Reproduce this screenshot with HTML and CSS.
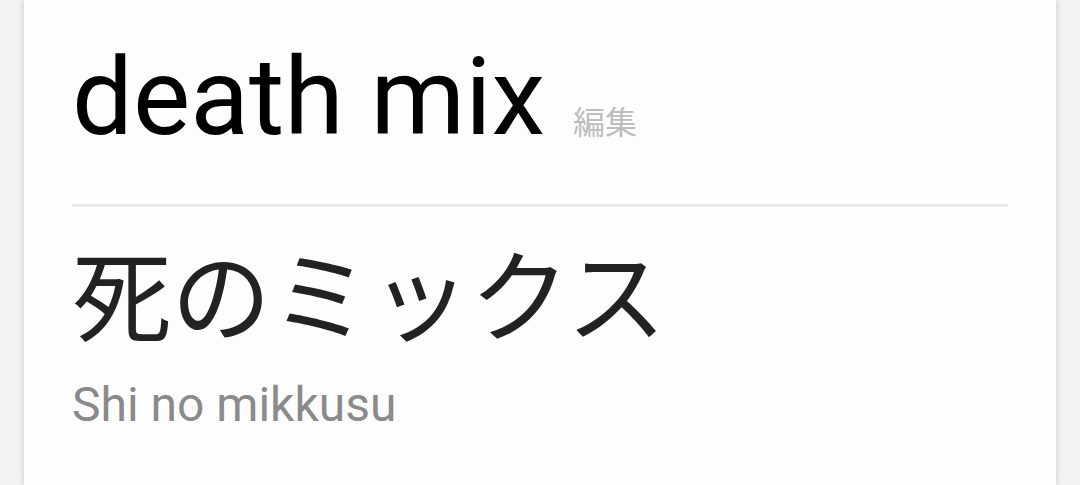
FILE: index.html
```html
<!DOCTYPE html>
<html lang="ja">
<head>
    <meta charset="UTF-8">
    <meta name="viewport" content="width=device-width, initial-scale=1.0">
    <title>death mix</title>
    <link rel="stylesheet" href="styles.css">
</head>
<body>
    <div class="card">
        <div class="title-row">
            <h1 class="title">death mix</h1>
            <a class="edit" href="#">編集</a>
        </div>
        <hr class="divider">
        <div class="word">死のミックス</div>
        <div class="reading">Shi no mikkusu</div>
    </div>
</body>
</html>
```

FILE: styles.css
```css
html, body {
    margin: 0;
    height: 100%;
}
body {
    background-color: #f2f2f2;
    font-family: Roboto, "Noto Sans CJK JP", sans-serif;
    overflow: hidden;
}
.card {
    margin: 0 24px;
    height: 100%;
    background: #fdfdfd;
    box-shadow: 0 0 6px rgba(0, 0, 0, 0.18);
    padding: 0 48px;
    box-sizing: border-box;
}
.title-row {
    display: flex;
    align-items: baseline;
    gap: 28px;
    padding-top: 27px;
}
.title {
    margin: 0;
    font-size: 108px;
    font-weight: 400;
    line-height: 140px;
    color: #000;
}
.edit {
    font-family: "Noto Sans CJK JP", sans-serif;
    font-size: 32px;
    color: #bdbdbd;
    text-decoration: none;
}
.divider {
    margin: 37px 0 0;
    border: none;
    height: 3px;
    background: #ebebeb;
}
.word {
    font-family: "Noto Sans CJK JP", sans-serif;
    font-size: 99.5px;
    line-height: 140px;
    color: #222;
    margin-top: 14px;
}
.reading {
    font-size: 48px;
    line-height: 60px;
    color: #8a8a8a;
    margin-top: 14px;
}
```
